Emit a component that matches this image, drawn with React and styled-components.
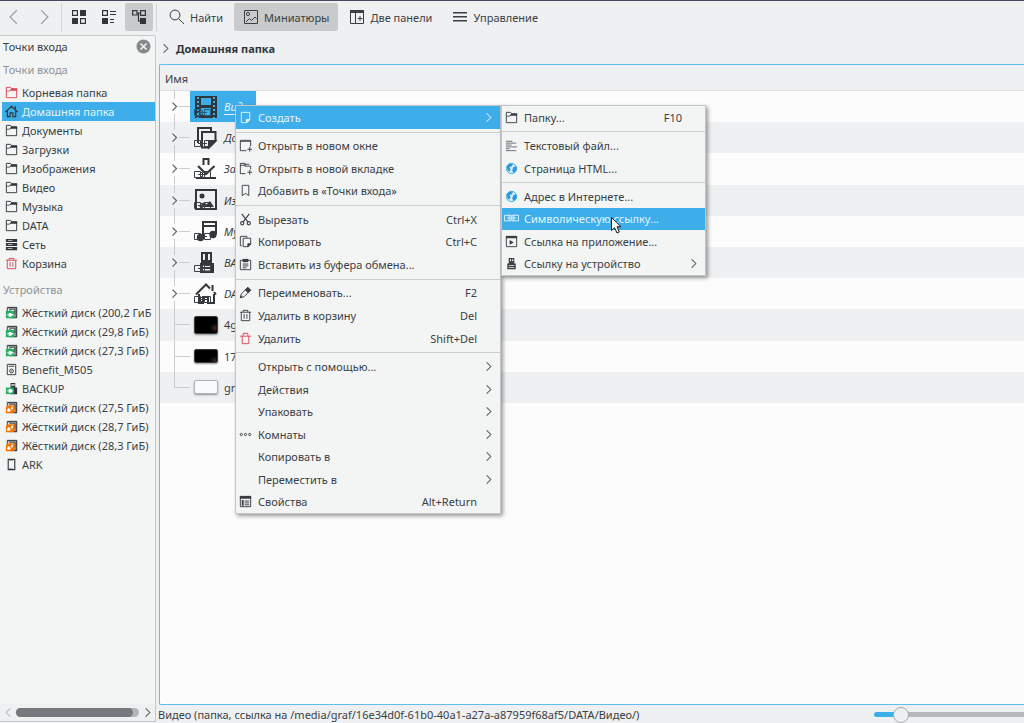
import React from 'react';
import styled, { createGlobalStyle, css } from 'styled-components';

const c = {
  text: '#3a3f44',
  ink: '#31363b',
  dim: '#8f9395',
  window: '#eff0f1',
  panel: '#f3f5f5',
  view: '#fcfcfc',
  line: '#c6c9cb',
  accent: '#3daee9',
  pressed: '#c9cacb',
  red: '#da4453',
  green: '#27ae60',
  orange: '#f67400',
};

const GlobalStyle = createGlobalStyle`
  *, *::before, *::after { box-sizing: border-box; }
  body {
    margin: 0;
    overflow: hidden;
    background: ${c.window};
    color: ${c.text};
    font: 11px/19px "Noto Sans", "Open Sans", sans-serif;
  }
  button {
    border: 0;
    margin: 0;
    padding: 0;
    background: none;
    color: inherit;
    font: inherit;
  }
  svg { display: block; flex: none; }
`;

/* ---------- icons ---------- */

const S = (props) => <g fill="none" stroke="currentColor" strokeWidth="1" {...props} />;

const glyphs = {
  folder: (
    <>
      <S><path d="M2.5 13.5V2.5H7L8.5 4.5H13.5V13.5Z" /></S>
      <path d="M8 3.5h6v2.5H7.2L6 7H2.5V6h3.3L7 4.8z" fill="currentColor" />
    </>
  ),
  home: (
    <S strokeWidth="1.2">
      <path d="M1.5 8.5L8 2.5L14.5 8.5M3.5 7V13.5H6.5V9.5H9.5V13.5H12.5V7M12 2V5.5" />
    </S>
  ),
  network: (
    <g fill="currentColor">
      <path d="M2 2h12v3.4H2zM2 6.3h12v3.4H2zM2 10.6h12V14H2z" />
      <path d="M4 3.3h5v.8H4zM4 7.6h5v.8H4zM4 11.9h5v.8H4z" fill="#d5d8da" />
    </g>
  ),
  trash: <S><path d="M2 4.5H14M5.5 4.5V2.5H10.5V4.5M3.5 4.5V13.5H12.5V4.5M6.5 6.5V11.5M9.5 6.5V11.5" /></S>,
  trashEmpty: <S><path d="M2 5.5H14M5.5 5V2.5H10.5V5M4.5 5.5V13.5H11.5V5.5" /></S>,
  diskOn: (
    <>
      <S><path d="M3.5 12.5V2.5H13.5V13.5H6M5.5 4.5H11.5V10" /></S>
      <path d="M4 2h10v2H4zM12 4h2v10h-3V6z" fill="currentColor" opacity=".55" />
      <path d="M2 6.5h3V5.5h3v1h3V14H2z" fill={c.green} />
      <path d="M3 10h2V8.4h3v1.2h2v1.6H8v1.2H5V11H3z" fill="#fff" />
    </>
  ),
  diskOff: (
    <>
      <S><path d="M3.5 12.5V2.5H13.5V13.5H6M5.5 4.5H11.5V10" /></S>
      <path d="M4 2h10v2H4zM12 4h2v10h-3V6z" fill="currentColor" opacity=".55" />
      <path d="M2 7.5L4.5 5.5H11.5V12L9.5 14H2z" fill={c.orange} />
      <path d="M3.5 12.5V10L5 8.5L7.5 11L6 12.5zM7 8.5L9.5 6.5V9.5L8.3 10.3z" fill="#fff" />
    </>
  ),
  player: (
    <S>
      <path d="M3.5 2.5H12.5V13.5H3.5ZM5 4.5H11" />
      <circle cx="8" cy="9.5" r="2" />
      <path d="M7.5 9.5h1" />
    </S>
  ),
  usbOn: (
    <>
      <path d="M7 2h5v5h2v7H7z" fill="currentColor" />
      <path d="M8 3.3h1.2v2H8zM10 3.3h1.2v2H10z" fill="#fff" />
      <path d="M2 7h8.5v7H2z" fill={c.green} />
      <path d="M3 10h2V8.6h3v1.2h1.8v1.5H8v1.2H5V11H3z" fill="#fff" />
    </>
  ),
  phone: <S strokeWidth="1.2"><path d="M4.5 2.5H11.5V13.5H4.5Z" /><path d="M6 3.5H10M6 12.5H10" strokeDasharray="1 1" /></S>,
  usb: (
    <g fill="currentColor">
      <path d="M5 2h6v6h1.5v6h-9V8H5z" />
      <path d="M6.3 3.5h1.2v2H6.3zM8.7 3.5h1.2v2H8.7zM5 9.5h6v.9H5zM5 11.7h6v.9H5z" fill={c.panel} />
    </g>
  ),
  doc: <S><path d="M3.5 2.5H12.5V10.5L9.5 13.5H3.5Z" /><path d="M12.5 10L9 10V13.5Z" fill="currentColor" /></S>,
  newWindow: <S><path d="M9 13.5H2.5V2.5H13.5V9M2.5 3.5H13.5M12.5 9.5V14.5M10 12H15" /></S>,
  newTab: <S><path d="M8 13.5H2.5V2.5H7.5V5.5H13.5V9M7 3.5H12M12.5 9.5V14.5M10 12H15M2.5 4.5H7.5" /></S>,
  bookmark: <S><path d="M4.5 2.5H11.5V13.5L8 11L4.5 13.5Z" /></S>,
  cut: <S strokeWidth="1.2"><path d="M4 2L10.5 10.5M12 2L5.5 10.5" /><circle cx="4.5" cy="12" r="1.7" /><circle cx="11.5" cy="12" r="1.7" /></S>,
  copy: <S><path d="M4 12.5H2.5V2.5H9.5V4M5.5 4.5H13.5V11L11 13.5H5.5Z" /><path d="M13.5 10.5H10.5V13.5Z" fill="currentColor" /></S>,
  paste: <><S><path d="M2.5 3.5H13.5V13.5H2.5ZM5 7.5H11M5 9.5H11M5 11.5H9" /></S><path d="M5 2h6v3.5H5z" fill="currentColor" /></>,
  pen: <><S><path d="M2.5 13.5L3.5 9.5L10.5 2.5L13.5 5.5L6.5 12.5Z" /></S><path d="M10.5 2L14 5.5L10.8 8.7L7.3 5.2zM2 14l1-3l2 2z" fill="currentColor" /></>,
  dots: <S><circle cx="3.5" cy="8" r="1.2" /><circle cx="8" cy="8" r="1.2" /><circle cx="12.5" cy="8" r="1.2" /></S>,
  props: <><S><path d="M2.5 2.5H13.5V13.5H2.5ZM7 7.5H12M7 9.5H12M7 11.5H12" /></S><path d="M2 2h12v3H2zM4 6.5h2V12.5H4z" fill="currentColor" /></>,
  textFile: <S opacity=".75"><path d="M2 3.5H9M2 5.5H13M2 7.5H8M2 9.5H14M2 11.5H6M2 13.5H13" /></S>,
  globe: (
    <>
      <circle cx="8" cy="8" r="5.5" fill="#d6edfa" stroke={c.accent} />
      <path d="M3 5.5L6 2.7L9.5 3L8.5 5.5L6 6.5L7 9L5.5 11.5L3.5 9.5zM10 6.5L13.3 5.5L13.5 9.5L10.5 13L8.7 10z" fill="#2f98dc" />
    </>
  ),
  link: <S><path d="M.5 4.5H5.5V10.5H.5ZM10.5 4.5H15.5V10.5H10.5ZM3 7.5H7M9 7.5H13M5.5 4.5H7.5V10.5H5.5M10.5 4.5H8.5V10.5H10.5" /></S>,
  app: <><S><path d="M2.5 2.5H13.5V13.5H2.5Z" /></S><path d="M2 2h12v2.5H2zM6 6.5L10.5 9L6 11.5z" fill="currentColor" /></>,
  iconsView: <><S strokeWidth="1.2"><path d="M1.6 1.6H6.4V6.4H1.6ZM9.6 9.6H14.4V14.4H9.6Z" /></S><path d="M9 1h6v6H9zM1 9h6v6H1z" fill="currentColor" /></>,
  listView: <><S strokeWidth="1.2"><path d="M1.6 1.6H6.4V6.4H1.6Z" /></S><path d="M1 9h6v6H1z" fill="currentColor" /><S><path d="M9 2.5H15M9 5.5H15M9 10.5H13M9 13.5H13" /></S></>,
  treeView: <><S strokeWidth="1.2"><path d="M1.6 1.6H6V6H1.6ZM9.6 1.6H14.4V6.4H9.6ZM6 4H9.6M7.5 4V12H10" /></S><path d="M9 9h6v6H9z" fill="currentColor" /></>,
  search: <S><circle cx="6" cy="6" r="4.9" /><path d="M9.5 9.5L15 15" /></S>,
  picture: <S><path d="M1.5 1.5H14.5V14.5H1.5ZM3 13L6.5 9.5L8.5 11.5L12 8L13.5 9.5" /><circle cx="5" cy="5" r="1.6" /></S>,
  split: <><S><path d="M1.5 1.5H14.5V14.5H1.5ZM6.5 3V14.5M8.5 9.5H13.5M11 7V12" /></S><path d="M1 1h14v3H1z" fill="currentColor" /></>,
  burger: <path d="M1 3h14v1.5H1zM1 7h14v1.5H1zM1 11h14v1.5H1z" fill="currentColor" />,
  left: <S><path d="M10.5 2L4.5 8L10.5 14" /></S>,
  right: <S><path d="M5.5 2L11.5 8L5.5 14" /></S>,
  chevron: <S strokeWidth="1.1" opacity=".85"><path d="M6 3.5L10.500 8L6 12.5" /></S>,
  chevronLeft: <S strokeWidth="1.1"><path d="M10 3.5L5.5 8L10 12.5" /></S>,
};

const Svg = styled.svg`
  color: ${(p) => p.$tone || 'inherit'};
`;

const Icon = ({ name, size = 15, tone }) => (
  <Svg width={size} height={size} viewBox="0 0 16 16" $tone={tone} aria-hidden="true">
    {glyphs[name]}
  </Svg>
);

const fileGlyphs = {
  video: (
    <>
      <path d="M1 1h22v22H1z" fill={c.ink} />
      <path d="M7 3h10v7H7zM7 13h10v7H7z" fill={c.accent} />
      <path d="M4 2V23M20 2V23" stroke={c.accent} strokeWidth="2" strokeDasharray="2 2" />
    </>
  ),
  documents: (
    <g fill="none" stroke={c.ink} strokeWidth="2">
      <path d="M4 17V2H17V5" />
      <path d="M8 6H21.5V15L15 21.5H8Z" />
      <path d="M21 15H15V21Z" fill={c.ink} />
    </g>
  ),
  downloads: (
    <g fill="none" stroke={c.ink} strokeWidth="2">
      <path d="M9.5 8V2H14.5V8" />
      <path d="M4 9L12 17L20.5 9M2 21H22" />
    </g>
  ),
  pictures: (
    <>
      <path d="M2 2H22V21H2Z" fill="none" stroke={c.ink} strokeWidth="2" />
      <circle cx="8" cy="8" r="2.5" fill={c.ink} />
      <path d="M5 19L10 14L12.5 16.5L16 13L20 19z" fill={c.ink} />
    </>
  ),
  music: (
    <g fill={c.ink}>
      <path d="M8 2h15v2H8zM8 6h15v2H8zM8 2h2v17H8zM21 2h2v13h-2z" />
      <circle cx="6.5" cy="18.5" r="3.7" />
      <circle cx="19" cy="15.5" r="3.7" />
    </g>
  ),
  usb: (
    <g fill={c.ink}>
      <path d="M7 1h11v11H7zM6 12h14v10H6z" />
      <path d="M9 3h2v6H9zM14 3h2v6h-2zM9 14.5h8v1.5H9zM9 18h8v1.5H9z" fill="#eff0f1" />
    </g>
  ),
  home: (
    <g fill="none" stroke={c.ink} strokeWidth="2">
      <path d="M2 12.5L12 2.5L16 6.5M18.5 3V9M20 10L22 12.5M5 12V21H9V15H14V21H20V12" />
    </g>
  ),
};

const FileIcon = ({ name }) => (
  <svg width="24" height="24" viewBox="0 0 24 24" aria-hidden="true">
    {fileGlyphs[name]}
    <g fill="none" stroke={name === 'video' ? '#1f5f83' : '#3c4146'}>
      <path d="M.5 14.5H6.5V20.5H.5ZM6.5 15.5H8.5V19.5H6.5ZM10.5 14.5H16.5V20.5H10.5ZM4 17.5H13" />
    </g>
  </svg>
);

/* ---------- frame ---------- */

const Page = styled.div`
  position: relative;
  display: flex;
  flex-direction: column;
  height: 100vh;
  overflow: hidden;
  border-top: 1px solid #464b59;
`;

const Toolbar = styled.header`
  display: flex;
  align-items: center;
  gap: 2px;
  height: 34px;
  flex: none;
  padding-bottom: 2px;
`;

const ToolButton = styled.button`
  display: flex;
  align-items: center;
  justify-content: center;
  gap: 5px;
  height: 28px;
  min-width: 28px;
  padding: 0 ${(p) => (p.$text ? 9 : 0)}px;
  border-radius: 2px;
  background: ${(p) => (p.$on ? c.pressed : 'transparent')};
  color: ${(p) => (p.$muted ? '#9a9d9f' : 'inherit')};
  white-space: nowrap;
`;

const ToolSeparator = styled.span`
  width: 1px;
  height: 29px;
  margin: 0 1px;
  background: #d3d5d6;
`;

const Body = styled.div`
  display: flex;
  flex: 1;
  min-height: 0;
`;

/* ---------- places panel ---------- */

const Sidebar = styled.aside`
  display: flex;
  flex-direction: column;
  width: 156px;
  flex: none;
  margin-bottom: 1px;
  overflow: hidden;
  border: solid ${c.line};
  border-width: 1px 1px 1px 0;
  border-radius: 0 2px 0 0;
  background: ${c.panel};
`;

const PanelTitle = styled.div`
  display: flex;
  align-items: center;
  justify-content: space-between;
  height: 23px;
  padding: 0 4px 2px 3px;
`;

const CloseButton = styled.button`
  width: 15px;
  height: 15px;
`;

const Section = styled.h2`
  margin: ${(p) => (p.$later ? 6 : 0)}px 0 0;
  padding: 0 0 2px 3px;
  color: ${c.dim};
  font-size: 11px;
  font-weight: 400;
  line-height: 21px;
`;

const PlaceList = styled.ul`
  margin: 0;
  padding: 1px 0 0 2px;
  list-style: none;
`;

const Place = styled.a`
  display: flex;
  align-items: center;
  gap: 3px;
  height: 19px;
  padding-left: 2px;
  overflow: hidden;
  color: ${(p) => (p.$current ? '#e4f4fd' : c.text)};
  background: ${(p) => (p.$current ? c.accent : 'transparent')};
  text-decoration: none;
  white-space: nowrap;
`;

const ScrollBar = styled.div`
  display: flex;
  align-items: center;
  height: 17px;
  margin-top: auto;
  background: ${c.window};
`;

const ScrollButton = styled.button`
  display: grid;
  place-items: center;
  width: 16px;
  height: 17px;
  color: ${(p) => (p.$muted ? '#b5b7b9' : c.text)};
`;

const ScrollTrack = styled.div`
  flex: 1;
  height: 9px;
  padding-right: 6px;
  border-radius: 5px;
  background: #b4b6b8;
`;

const ScrollThumb = styled.div`
  height: 100%;
  border-radius: 5px;
  background: #76797d;
`;

/* ---------- file view ---------- */

const Main = styled.main`
  display: flex;
  flex-direction: column;
  flex: 1;
  min-width: 0;
  padding-left: 2px;
`;

const Breadcrumb = styled.nav`
  display: flex;
  align-items: center;
  gap: 3px;
  height: 29px;
  flex: none;
  padding-bottom: 2px;
`;

const Crumb = styled.a`
  color: ${c.ink};
  font-weight: 700;
  text-decoration: none;
`;

const View = styled.div`
  flex: 1;
  min-height: 0;
  overflow: hidden;
  margin-left: 1px;
  border: solid #62bdec;
  border-width: 1px 0 1px 1px;
  border-radius: 2px 0 0 2px;
  background: ${c.view};
`;

const FileTable = styled.table`
  display: block;
  border-spacing: 0;
`;

const HeadRow = styled.thead`
  display: block;
  border-bottom: 1px solid #dcdedf;
  background: ${c.window};

  tr { display: block; }

  th {
    display: block;
    padding: 4px 5px 2px;
    font-weight: 400;
    text-align: left;
  }
`;

const FileRows = styled.tbody`
  display: grid;
  grid-auto-rows: minmax(0, 1fr);
  height: 312px;
`;

const FileRow = styled.tr`
  display: block;
  min-height: 0;

  &:nth-child(even) { background: ${c.window}; }
`;

const FileCell = styled.td`
  display: flex;
  height: 100%;
  padding: 0;
`;

const Branch = styled.svg`
  height: 100%;
  overflow: visible;
`;

const FileItem = styled.div`
  display: flex;
  align-items: center;
  gap: 6px;
  padding: 0 2px 0 4px;
  font-style: ${(p) => (p.$link ? 'italic' : 'normal')};
  ${(p) =>
    p.$selected &&
    css`
      background: ${c.accent};
      color: #e4f4fd;
      text-decoration: underline;
      text-underline-offset: 3px;
    `}
`;

const Thumb = styled.span`
  width: 24px;
  height: ${(p) => p.$h}px;
  border: 1px solid ${(p) => (p.$light ? '#aeb4b8' : '#3c3c3c')};
  border-radius: 2px;
  background: ${(p) =>
    p.$light
      ? '#f8fafb'
      : 'radial-gradient(circle at 20px 11px, #3f2a20 0, #0a0605 4px, #000 6px)'};
  box-shadow: 0 1px 2px #0006;
`;

const StatusBar = styled.footer`
  display: flex;
  align-items: center;
  justify-content: space-between;
  gap: 16px;
  height: 18px;
  flex: none;
  white-space: nowrap;
`;

const ZoomSlider = styled.input`
  appearance: none;
  width: 150px;
  height: 16px;
  margin: 0;
  background: transparent;

  &::-webkit-slider-runnable-track {
    height: 5px;
    border-radius: 3px 0 0 3px;
    background: linear-gradient(90deg, ${c.accent} 27px, #b6b8b9 27px);
  }

  &::-webkit-slider-thumb {
    appearance: none;
    width: 16px;
    height: 16px;
    margin-top: -5px;
    border: 1px solid #a9acae;
    border-radius: 50%;
    background: ${c.window};
  }
`;

/* ---------- menus ---------- */

const Menu = styled.div`
  position: absolute;
  display: flex;
  flex-direction: column;
  left: ${(p) => p.$x}px;
  top: 104px;
  width: ${(p) => p.$w}px;
  height: ${(p) => p.$h}px;
  border: 1px solid #c3c6c8;
  background: ${c.panel};
  box-shadow: 2px 2px 4px #0006;
`;

const MenuItem = styled.button`
  display: flex;
  align-items: center;
  flex: 1;
  gap: 5px;
  min-height: 0;
  padding: 0 4px 0 2px;
  text-align: left;
  white-space: nowrap;
  ${(p) =>
    p.$active &&
    css`
      background: ${c.accent};
      color: #e4f4fd;
    `}
`;

const IconSlot = styled.span`
  width: 15px;
  flex: none;
`;

const MenuLabel = styled.span`
  flex: 1;
`;

const Shortcut = styled.span`
  padding-right: 19px;
`;

const MenuSeparator = styled.hr`
  width: 100%;
  height: 1px;
  margin: 3px 0 2px;
  border: 0;
  flex: none;
  background: #cbced0;
`;

const Cursor = styled.svg`
  position: absolute;
  left: 610px;
  top: 215px;
`;

/* ---------- data ---------- */

const places = [
  ['folder', 'Корневая папка', c.red],
  ['home', 'Домашняя папка', c.ink],
  ['folder', 'Документы'],
  ['folder', 'Загрузки'],
  ['folder', 'Изображения'],
  ['folder', 'Видео'],
  ['folder', 'Музыка'],
  ['folder', 'DATA'],
  ['network', 'Сеть'],
  ['trash', 'Корзина', c.red],
];

const devices = [
  ['diskOn', 'Жёсткий диск (200,2 ГиБ'],
  ['diskOn', 'Жёсткий диск (29,8 ГиБ)'],
  ['diskOn', 'Жёсткий диск (27,3 ГиБ)'],
  ['player', 'Benefit_M505'],
  ['usbOn', 'BACKUP'],
  ['diskOff', 'Жёсткий диск (27,5 ГиБ)'],
  ['diskOff', 'Жёсткий диск (28,7 ГиБ)'],
  ['diskOff', 'Жёсткий диск (28,3 ГиБ)'],
  ['phone', 'ARK'],
];

const files = [
  { icon: 'video', name: 'Видео', selected: true },
  { icon: 'documents', name: 'До' },
  { icon: 'downloads', name: 'За' },
  { icon: 'pictures', name: 'Из' },
  { icon: 'music', name: 'Му' },
  { icon: 'usb', name: 'BA' },
  { icon: 'home', name: 'DA' },
  { thumb: 18, name: '4g' },
  { thumb: 14, name: '17' },
  { thumb: 14, light: true, name: 'gr' },
];

const contextMenu = [
  { icon: 'doc', label: 'Создать', sub: true, active: true },
  null,
  { icon: 'newWindow', label: 'Открыть в новом окне' },
  { icon: 'newTab', label: 'Открыть в новой вкладке' },
  { icon: 'bookmark', label: 'Добавить в «Точки входа»' },
  null,
  { icon: 'cut', label: 'Вырезать', key: 'Ctrl+X' },
  { icon: 'copy', label: 'Копировать', key: 'Ctrl+C' },
  { icon: 'paste', label: 'Вставить из буфера обмена...' },
  null,
  { icon: 'pen', label: 'Переименовать...', key: 'F2' },
  { icon: 'trash', label: 'Удалить в корзину', key: 'Del' },
  { icon: 'trashEmpty', tone: c.red, label: 'Удалить', key: 'Shift+Del' },
  null,
  { label: 'Открыть с помощью...', sub: true },
  { label: 'Действия', sub: true },
  { label: 'Упаковать', sub: true },
  { icon: 'dots', label: 'Комнаты', sub: true },
  { label: 'Копировать в', sub: true },
  { label: 'Переместить в', sub: true },
  { icon: 'props', label: 'Свойства', key: 'Alt+Return' },
];

const createMenu = [
  { icon: 'folder', label: 'Папку...', key: 'F10' },
  null,
  { icon: 'textFile', label: 'Текстовый файл...' },
  { icon: 'globe', label: 'Страница HTML...' },
  null,
  { icon: 'globe', label: 'Адрес в Интернете...' },
  { icon: 'link', label: 'Символическую ссылку...', active: true },
  { icon: 'app', label: 'Ссылка на приложение...' },
  { icon: 'usb', label: 'Ссылку на устройство', sub: true },
];

/* ---------- parts ---------- */

const Places = ({ items, current }) => (
  <PlaceList>
    {items.map(([icon, label, tone]) => (
      <li key={label}>
        <Place href="#" $current={label === current}>
          <Icon name={icon} tone={tone || c.ink} />
          {label}
        </Place>
      </li>
    ))}
  </PlaceList>
);

const TreeBranch = ({ folder, last }) => (
  <Branch width="30" aria-hidden="true">
    <g stroke="#c9cbcc" shapeRendering="crispEdges">
      <line x1="14.5" x2="14.5" y1="0" y2={folder ? '25%' : '50%'} />
      {!last && <line x1="14.5" x2="14.5" y1={folder ? '75%' : '50%'} y2="100%" />}
      <line x1={folder ? 19 : 14} x2="30" y1="50%" y2="50%" />
    </g>
    {folder && (
      <svg y="50%" overflow="visible">
        <path d="M12.5 -4L16.5 0L12.5 4" fill="none" stroke="#5a5e62" strokeWidth="1.2" />
      </svg>
    )}
  </Branch>
);

const PopupMenu = ({ items, label, x, w, h }) => (
  <Menu role="menu" aria-label={label} $x={x} $w={w} $h={h}>
    {items.map((item, i) =>
      item ? (
        <MenuItem key={item.label} type="button" role="menuitem" $active={item.active}>
          <IconSlot>{item.icon && <Icon name={item.icon} tone={item.tone} />}</IconSlot>
          <MenuLabel>{item.label}</MenuLabel>
          {item.key && <Shortcut>{item.key}</Shortcut>}
          {item.sub && <Icon name="chevron" />}
        </MenuItem>
      ) : (
        <MenuSeparator key={i} />
      )
    )}
  </Menu>
);

export default function App() {
  return (
    <Page>
      <GlobalStyle />
      <Toolbar>
        <ToolButton $muted aria-label="Назад"><Icon name="left" size={18} /></ToolButton>
        <ToolButton $muted aria-label="Вперёд"><Icon name="right" size={18} /></ToolButton>
        <ToolSeparator />
        <ToolButton aria-label="Значки"><Icon name="iconsView" size={16} tone={c.ink} /></ToolButton>
        <ToolButton aria-label="Список"><Icon name="listView" size={16} tone={c.ink} /></ToolButton>
        <ToolButton $on aria-label="Таблица"><Icon name="treeView" size={16} tone={c.ink} /></ToolButton>
        <ToolSeparator />
        <ToolButton $text><Icon name="search" size={16} />Найти</ToolButton>
        <ToolButton $text $on><Icon name="picture" size={16} />Миниатюры</ToolButton>
        <ToolButton $text><Icon name="split" size={16} />Две панели</ToolButton>
        <ToolButton $text><Icon name="burger" size={16} />Управление</ToolButton>
      </Toolbar>

      <Body>
        <Sidebar>
          <PanelTitle>
            Точки входа
            <CloseButton aria-label="Закрыть">
              <svg width="15" height="15" viewBox="0 0 15 15" aria-hidden="true">
                <circle cx="7.5" cy="7.5" r="7" fill="#85898c" />
                <path d="M4.5 4.5L10.5 10.5M10.5 4.5L4.5 10.5" stroke="#f3f5f5" strokeWidth="1.5" />
              </svg>
            </CloseButton>
          </PanelTitle>
          <Section>Точки входа</Section>
          <Places items={places} current="Домашняя папка" />
          <Section $later>Устройства</Section>
          <Places items={devices} />
          <ScrollBar>
            <ScrollButton $muted aria-label="Влево"><Icon name="chevronLeft" /></ScrollButton>
            <ScrollTrack><ScrollThumb /></ScrollTrack>
            <ScrollButton aria-label="Вправо"><Icon name="chevron" /></ScrollButton>
          </ScrollBar>
        </Sidebar>

        <Main>
          <Breadcrumb>
            <Icon name="chevron" />
            <Crumb href="#">Домашняя папка</Crumb>
          </Breadcrumb>
          <View>
            <FileTable>
              <HeadRow>
                <tr><th scope="col">Имя</th></tr>
              </HeadRow>
              <FileRows>
                {files.map((f, i) => (
                  <FileRow key={f.name}>
                    <FileCell>
                      <TreeBranch folder={!f.thumb} last={i === files.length - 1} />
                      <FileItem $link={!f.thumb} $selected={f.selected}>
                        {f.thumb ? <Thumb $h={f.thumb} $light={f.light} /> : <FileIcon name={f.icon} />}
                        {f.name}
                      </FileItem>
                    </FileCell>
                  </FileRow>
                ))}
              </FileRows>
            </FileTable>
          </View>
          <StatusBar>
            <span>Видео (папка, ссылка на /media/graf/16e34d0f-61b0-40a1-a27a-a87959f68af5/DATA/Видео/)</span>
            <ZoomSlider type="range" min="0" max="100" defaultValue="14" aria-label="Масштаб" />
          </StatusBar>
        </Main>
      </Body>

      <PopupMenu items={contextMenu} label="Видео" x={235} w={266} h={409} />
      <PopupMenu items={createMenu} label="Создать" x={501} w={205} h={171} />
      <Cursor width="13" height="19" viewBox="0 0 13 19" aria-hidden="true">
        <path d="M1.5 1.5V14.5L4.5 11.7L7 17L9.3 16L7 10.8H11Z" fill="#fff" stroke="#1b1b1b" />
      </Cursor>
    </Page>
  );
}
